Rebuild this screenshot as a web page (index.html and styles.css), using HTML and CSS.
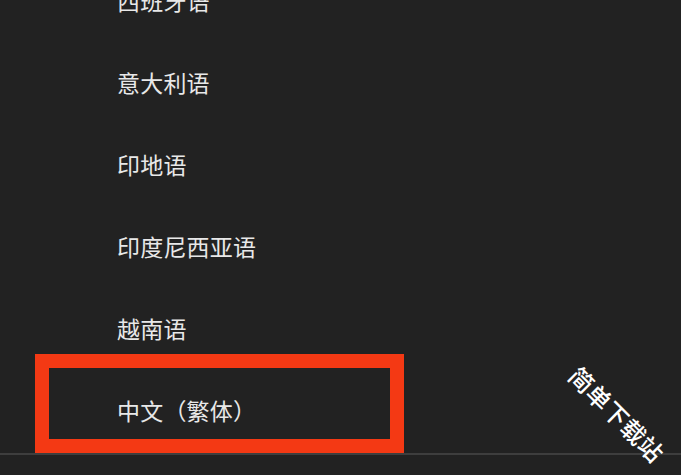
FILE: index.html
```html
<!DOCTYPE html>
<html lang="zh-CN">
<head>
    <meta charset="UTF-8">
    <meta name="viewport" content="width=device-width, initial-scale=1.0">
    <title>语言</title>
    <link rel="stylesheet" href="styles.css">
</head>
<body>

<!-- Lista de idiomas -->
<div class="pantalla">
    <ul class="idiomas">
        <li>西班牙语</li>
        <li>意大利语</li>
        <li>印地语</li>
        <li>印度尼西亚语</li>
        <li>越南语</li>
        <li class="marcado">中文（繁体）</li>
    </ul>
    <div class="separador"></div>

    <!-- Recuadro rojo sobre la opción -->
    <div class="recuadro"></div>
    <div class="sello">简单下载站</div>
</div>

</body>
</html>
```

FILE: styles.css
```css
html, body {
    margin: 0;
    padding: 0;
    background-color: #222222;
}
body {
    font-family: "Noto Sans CJK SC", "Noto Sans", sans-serif;
    color: #e8e8e8;
    overflow: hidden;
}
.pantalla {
    position: relative;
    width: 681px;
    height: 475px;
    overflow: hidden;
}
.idiomas {
    list-style: none;
    margin: -41px 0 0 0;
    padding: 0;
}
.idiomas li {
    height: 82px;
    display: flex;
    align-items: center;
    padding-left: 117px;
    font-size: 23px;
    letter-spacing: 0.2px;
}
.separador {
    height: 2px;
    margin-top: 2px;
    background-color: #3e3e3e;
}
.recuadro {
    position: absolute;
    left: 35px;
    top: 354px;
    width: 341px;
    height: 71px;
    border: 14px solid #f43914;
}
.sello {
    position: absolute;
    left: 556px;
    top: 397px;
    font-size: 24px;
    font-weight: 500;
    line-height: 34px;
    color: #ffffff;
    white-space: nowrap;
    letter-spacing: 0.4px;
    transform: rotate(45deg);
    transform-origin: center;
}
```
